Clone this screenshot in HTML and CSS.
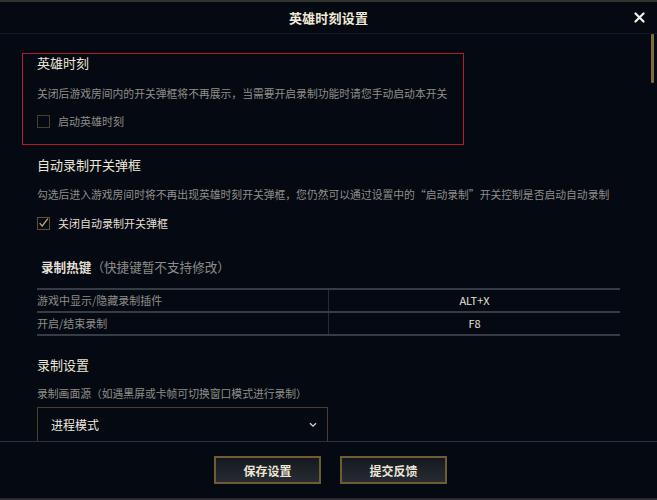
FILE: index.html
```html
<!DOCTYPE html>
<html lang="zh-CN">
<head>
<meta charset="utf-8">
<title>英雄时刻设置</title>
<link rel="stylesheet" href="styles.css">
</head>
<body>
<div class="dialog">
  <header class="head">
    <div class="head-title">英雄时刻设置</div>
    <button class="close" aria-label="关闭">
      <svg width="11" height="11" viewBox="0 0 11 11"><path d="M1.5 1.5 L9.5 9.5 M9.5 1.5 L1.5 9.5" stroke="#f4f1ea" stroke-width="2.2" stroke-linecap="round"/></svg>
    </button>
  </header>
  <main class="body">
    <div class="scroll-thumb"></div>
    <section class="box-red">
      <div class="sec-title">英雄时刻</div>
      <div class="desc d1">关闭后游戏房间内的开关弹框将不再展示，当需要开启录制功能时请您手动启动本开关</div>
      <label class="check-row c1"><span class="cb"></span><span class="cb-label dim">启动英雄时刻</span></label>
    </section>
    <section class="sec">
      <div class="sec-title t2">自动录制开关弹框</div>
      <div class="desc d2">勾选后进入游戏房间时将不再出现英雄时刻开关弹框，您仍然可以通过设置中的“启动录制”开关控制是否启动自动录制</div>
      <label class="check-row c2"><span class="cb checked"><svg width="12" height="12" viewBox="0 0 12 12"><path d="M1.8 6.2 L4.6 9.2 L10.8 1.2" fill="none" stroke="#c8aa6e" stroke-width="1.4"/></svg></span><span class="cb-label">关闭自动录制开关弹框</span></label>
    </section>
    <section class="sec">
      <div class="sec-title t3"><span class="strong">录制热键</span><span class="sub">（快捷键暂不支持修改）</span></div>
      <div class="table">
        <div class="row"><div class="cell left">游戏中显示/隐藏录制插件</div><div class="cell right">ALT+X</div></div>
        <div class="row last"><div class="cell left">开启/结束录制</div><div class="cell right">F8</div></div>
      </div>
    </section>
    <section class="sec">
      <div class="sec-title t4">录制设置</div>
      <div class="desc d4">录制画面源（如遇黑屏或卡帧可切换窗口模式进行录制）</div>
      <div class="select">
        <span>进程模式</span>
        <svg width="8" height="6" viewBox="0 0 8 6"><path d="M1 1.2 L4 4.2 L7 1.2" fill="none" stroke="#d8d4cc" stroke-width="1.3"/></svg>
      </div>
    </section>
  </main>
  <footer class="foot">
    <button class="btn">保存设置</button>
    <button class="btn">提交反馈</button>
  </footer>
</div>
</body>
</html>
```
FILE: styles.css
```css
* { box-sizing: border-box; }
html, body { margin: 0; padding: 0; background: #04080f; }
body { font-family: "Noto Sans CJK SC", "Noto Sans", sans-serif; }

.dialog {
  width: 657px;
  height: 500px;
  display: flex;
  flex-direction: column;
  background: #050a12;
  border-top: 2px solid #34342e;
  border-bottom: 2px solid #2a2c2c;
}

.head {
  height: 32px;
  flex: none;
  display: flex;
  align-items: center;
  justify-content: center;
  position: relative;
  border-bottom: 1px solid #111924;
}
.head-title {
  color: #f0e9d8;
  font-size: 13px;
  font-weight: 700;
  letter-spacing: 0.2px;
}
.close {
  position: absolute;
  right: 11px;
  top: 9px;
  width: 13px;
  height: 13px;
  padding: 0;
  border: 0;
  background: transparent;
  display: flex;
  align-items: center;
  justify-content: center;
}

.body {
  flex: 1;
  overflow: hidden;
  position: relative;
  padding: 19px 0 0 22px;
}
.scroll-thumb {
  position: absolute;
  right: 3px;
  top: 0;
  width: 3px;
  height: 49px;
  background: #7d6a3f;
  border-radius: 1px;
}

.box-red {
  width: 442px;
  border: 1px solid #b01e2c;
  padding: 0 0 15px 14px;
}
.sec { padding-left: 15px; }

.sec-title {
  color: #ece6d8;
  font-size: 13px;
  line-height: 18px;
  height: 18px;
}
.t2 { margin-top: 11px; }
.t3 { margin-top: 27px; padding-left: 4px; font-size: 12.6px; }
.t3 .strong { font-weight: 700; color: #e4dfd2; }
.t4 { margin-top: 20px; }
.sub { color: #8d8c88; font-weight: 400; }

.desc {
  color: #8f8e8a;
  font-size: 10.8px;
  line-height: 16px;
  white-space: nowrap;
}
.d1 { margin-top: 13px; }
.d2 { margin-top: 12px; }
.d4 { margin-top: 11px; }

.check-row {
  display: flex;
  align-items: center;
  height: 16px;
}
.c1 { margin-top: 12px; }
.c2 { margin-top: 13px; }
.cb {
  width: 13px;
  height: 13px;
  border: 1px solid #4a402e;
  margin-right: 8px;
  display: flex;
  align-items: center;
  justify-content: center;
  overflow: visible;
}
.cb.checked { border-color: #5e5034; }
.cb-label {
  color: #e2ddd2;
  font-size: 11px;
}
.cb-label.dim { color: #8d8c88; }

.table {
  margin-top: 12px;
  width: 583px;
}
.row {
  display: flex;
  height: 23px;
  border-top: 2px solid #363c45;
}
.row.last { border-bottom: 2px solid #363c45; height: 25px; }
.cell {
  font-size: 11px;
  line-height: 21px;
}
.left {
  width: 292px;
  color: #8d8c88;
  border-right: 1px solid #262c34;
}
.right {
  flex: 1;
  text-align: center;
  color: #e6e2d8;
}

.select {
  margin-top: 6px;
  width: 291px;
  height: 34px;
  border: 1px solid #4a3f2b;
  border-bottom: 0;
  display: flex;
  align-items: center;
  justify-content: space-between;
  padding: 0 10px 0 13px;
  color: #ece8de;
  font-size: 12px;
}

.foot {
  height: 57px;
  flex: none;
  border-top: 1px solid #2a323d;
  display: flex;
  justify-content: center;
  align-items: center;
  gap: 19px;
  padding-left: 4px;
}
.btn {
  width: 107px;
  height: 28px;
  border: 2px solid #6f5c33;
  background: linear-gradient(to bottom, #15191f, #272b33);
  color: #ece6d6;
  font-family: "Noto Sans CJK SC", "Noto Sans", sans-serif;
  font-size: 12px;
  font-weight: 700;
  padding: 0;
}
```
